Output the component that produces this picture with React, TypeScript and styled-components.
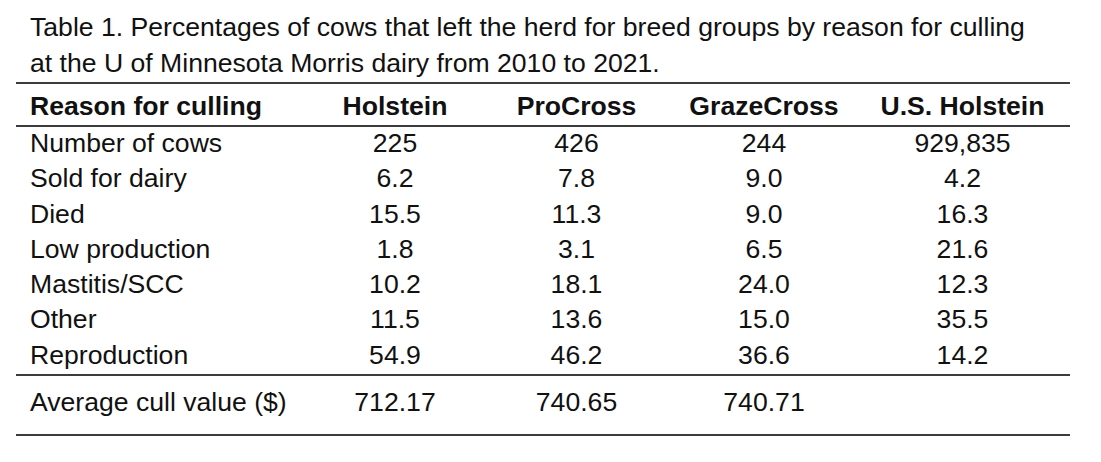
import React from "react";
import styled, { createGlobalStyle } from "styled-components";

const Global = createGlobalStyle`
  html, body { margin: 0; padding: 0; background: #ffffff; }
  body { font-family: "Liberation Sans", Arial, sans-serif; color: #111111; }
`;

const Page = styled.div`
  width: 1101px;
  height: 462px;
  box-sizing: border-box;
  padding: 9px 30px 0 16px;
`;

const Caption = styled.div`
  font-size: 26.6px;
  line-height: 36px;
  padding-left: 14px;
  height: 73px;
  white-space: nowrap;
`;

const Table = styled.div`
  display: grid;
  grid-template-columns: 288px 182px 181px 194px 209px;
  width: 1055px;
`;

const Rule = styled.div`
  grid-column: 1 / -1;
  height: 2px;
  background: #3c3c3c;
`;

const Cell = styled.div<{ $first?: boolean; $bold?: boolean; $h: number; $lh: number; $pt?: number; $shift?: number }>`
  font-size: 26.6px;
  line-height: ${(p) => p.$lh}px;
  height: ${(p) => p.$h}px;
  box-sizing: border-box;
  padding-top: ${(p) => p.$pt ?? 0}px;
  font-weight: ${(p) => (p.$bold ? 700 : 400)};
  text-align: ${(p) => (p.$first ? "left" : "center")};
  padding-left: ${(p) => (p.$first ? 14 : 0)}px;
  padding-right: ${(p) => p.$shift ?? 0}px;
  white-space: nowrap;
`;

const headers = ["Reason for culling", "Holstein", "ProCross", "GrazeCross", "U.S. Holstein"];
const rows: string[][] = [
  ["Number of cows", "225", "426", "244", "929,835"],
  ["Sold for dairy", "6.2", "7.8", "9.0", "4.2"],
  ["Died", "15.5", "11.3", "9.0", "16.3"],
  ["Low production", "1.8", "3.1", "6.5", "21.6"],
  ["Mastitis/SCC", "10.2", "18.1", "24.0", "12.3"],
  ["Other", "11.5", "13.6", "15.0", "35.5"],
  ["Reproduction", "54.9", "46.2", "36.6", "14.2"],
];
const avg = ["Average cull value ($)", "712.17", "740.65", "740.71", ""];

export default function App() {
  return (
    <Page>
      <Global />
      <Caption>
        Table 1. Percentages of cows that left the herd for breed groups by reason for culling
        <br />
        at the U of Minnesota Morris dairy from 2010 to 2021.
      </Caption>
      <Table>
        <Rule />
        {headers.map((h, i) => (
          <Cell key={h} $first={i === 0} $bold $h={41} $lh={36} $pt={4} $shift={i === 4 ? 6 : 0}>
            {h}
          </Cell>
        ))}
        <Rule />
        {rows.map((r) =>
          r.map((c, i) => (
            <Cell key={r[0] + i} $first={i === 0} $h={35.3} $lh={32} $shift={i === 4 ? 6 : 0}>
              {c}
            </Cell>
          ))
        )}
        <Rule />
        {avg.map((c, i) => (
          <Cell key={"avg" + i} $first={i === 0} $h={58} $lh={36} $pt={8} $shift={i === 4 ? 6 : 0}>
            {c}
          </Cell>
        ))}
        <Rule />
      </Table>
    </Page>
  );
}
